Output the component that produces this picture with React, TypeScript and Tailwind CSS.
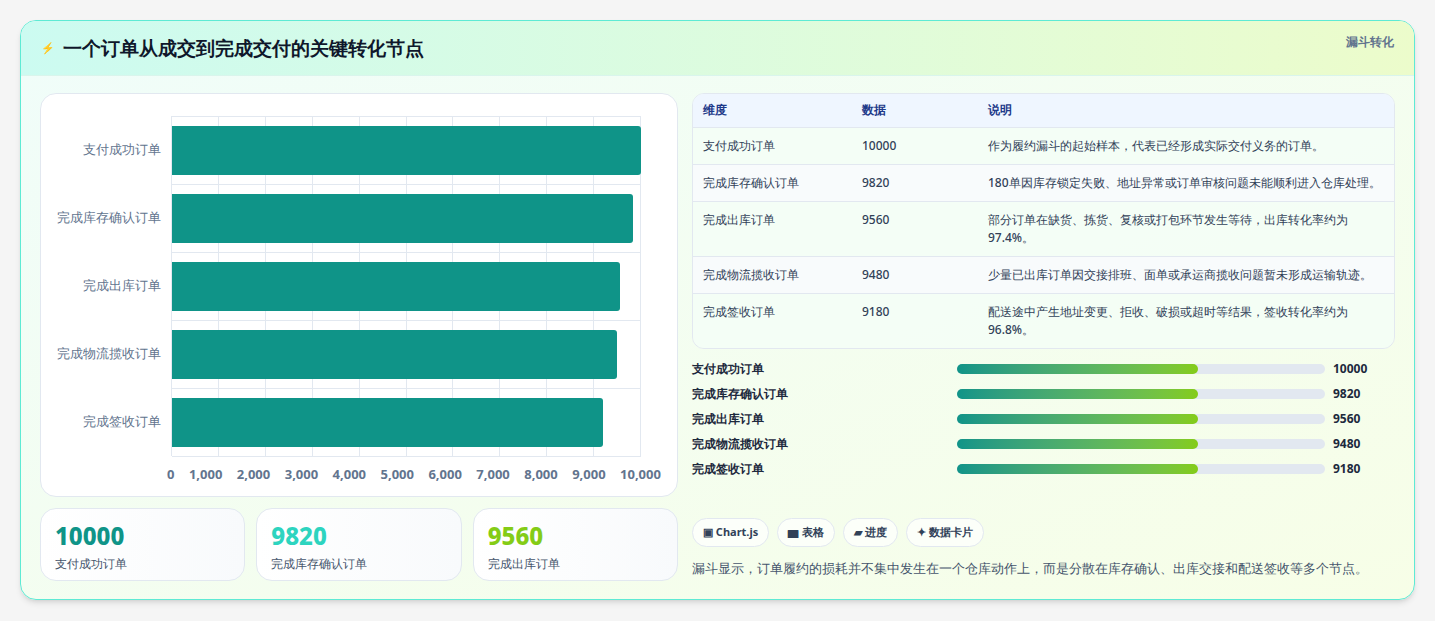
import React from 'react';

const rows = [
  { name: '支付成功订单', value: 10000, note: '作为履约漏斗的起始样本，代表已经形成实际交付义务的订单。' },
  { name: '完成库存确认订单', value: 9820, note: '180单因库存锁定失败、地址异常或订单审核问题未能顺利进入仓库处理。' },
  { name: '完成出库订单', value: 9560, note: '部分订单在缺货、拣货、复核或打包环节发生等待，出库转化率约为97.4%。' },
  { name: '完成物流揽收订单', value: 9480, note: '少量已出库订单因交接排班、面单或承运商揽收问题暂未形成运输轨迹。' },
  { name: '完成签收订单', value: 9180, note: '配送途中产生地址变更、拒收、破损或超时等结果，签收转化率约为96.8%。' },
];

const ticks = ['0', '1,000', '2,000', '3,000', '4,000', '5,000', '6,000', '7,000', '8,000', '9,000', '10,000'];

const BarChart: React.FC = () => (
  <div className="h-[404px] rounded-2xl border border-slate-200 bg-white pl-3 pr-9 pt-[22px]">
    <div className="flex">
      <div className="flex w-[118px] flex-col">
        {rows.map((r) => (
          <div key={r.name} className="flex h-[68px] items-center justify-end pr-[10px] text-[13px] text-slate-500">
            {r.name}
          </div>
        ))}
      </div>
      <div className="relative h-[340px] flex-1 border-l border-t border-slate-200">
        <div className="absolute inset-0 flex">
          {ticks.slice(1).map((t) => (
            <div key={t} className="flex-1 border-r border-slate-200" />
          ))}
        </div>
        <div className="relative flex flex-col">
          {rows.map((r) => (
            <div key={r.name} className="flex h-[68px] items-center border-b border-slate-200">
              <div className="h-[49px] rounded-r-[3px] bg-[#0f9488]" style={{ width: `${(r.value / 10000) * 100}%` }} />
            </div>
          ))}
        </div>
      </div>
    </div>
    <div className="ml-[118px] mt-[9px] flex justify-between text-[13px] font-bold text-slate-500">
      {ticks.map((t, i) => (
        <span key={t} className={i === 0 ? '-ml-[4px]' : i === 10 ? '-mr-[20px]' : ''}>{t}</span>
      ))}
    </div>
  </div>
);

const StatCard: React.FC<{ value: string; label: string; color: string }> = ({ value, label, color }) => (
  <div className="h-[73px] flex-1 rounded-2xl border border-slate-200 bg-gradient-to-r from-white to-[#f8fafc] px-[14px] pt-[12px]">
    <div className={`text-[24px] font-extrabold leading-[30px] ${color}`}>{value}</div>
    <div className="mt-[4px] text-[12px] text-slate-600">{label}</div>
  </div>
);

const App: React.FC = () => (
  <div className="min-h-[621px] bg-[#f5f5f5] px-5 pt-5 font-['Noto_Sans_CJK_SC','Noto_Sans',sans-serif] text-slate-800">
    <div className="h-[580px] overflow-hidden rounded-2xl border border-[#5eead4] bg-gradient-to-br from-[#f0fdfa] to-[#f7fee7] shadow-md">
      <div className="flex h-[55px] items-center justify-between border-b border-[#d9f5ec] bg-gradient-to-r from-[#ccfbf1] to-[#ecfccb] pl-[20px] pr-[20px]">
        <div className="flex items-center gap-[8px]">
          <span className="text-[11px] text-[#2563eb]">⚡</span>
          <h1 className="text-[19px] font-bold text-slate-900">一个订单从成交到完成交付的关键转化节点</h1>
        </div>
        <span className="-mt-[12px] text-[12px] font-semibold text-slate-500">漏斗转化</span>
      </div>
      <div className="flex gap-[14px] px-[19px] pt-[17px]">
        <div className="flex w-[638px] flex-col gap-[11px]">
          <BarChart />
          <div className="flex gap-[11px]">
            <StatCard value="10000" label="支付成功订单" color="text-[#0f9488]" />
            <StatCard value="9820" label="完成库存确认订单" color="text-[#2dd4bf]" />
            <StatCard value="9560" label="完成出库订单" color="text-[#84cc16]" />
          </div>
        </div>
        <div className="flex flex-1 flex-col">
          <div className="overflow-hidden rounded-xl border border-slate-200 bg-white/60">
            <table className="w-full text-left text-[12px]">
              <thead>
                <tr className="h-[33px] bg-[#eff6ff] text-[#1e3a8a]">
                  <th className="w-[169px] pl-[10px] font-semibold">维度</th>
                  <th className="w-[126px] font-semibold">数据</th>
                  <th className="font-semibold">说明</th>
                </tr>
              </thead>
              <tbody>
                {rows.map((r, i) => (
                  <tr key={r.name} className={`border-t border-slate-200 align-top font-medium text-slate-700 ${i % 2 ? 'bg-[#f8fafc]/80' : 'bg-[#f0fdf4]/60'}`}>
                    <td className="py-[9px] pl-[10px]">{r.name}</td>
                    <td className="py-[9px]">{r.value}</td>
                    <td className="py-[9px] pr-[12px] leading-[18px]">{r.note}</td>
                  </tr>
                ))}
              </tbody>
            </table>
          </div>
          <div className="mt-[11px] flex flex-col gap-[7px]">
            {rows.map((r) => (
              <div key={r.name} className="flex h-[18px] items-center text-[12px] font-semibold text-slate-800">
                <span className="w-[265px]">{r.name}</span>
                <div className="h-[10px] w-[368px] rounded-full bg-slate-200">
                  <div className="h-full w-[65.5%] rounded-full bg-gradient-to-r from-[#0f9488] to-[#84cc16]" />
                </div>
                <span className="ml-[8px] font-bold">{r.value}</span>
              </div>
            ))}
          </div>
          <div className="mt-[40px] flex gap-[8px]">
            {['▣ Chart.js', '▆ 表格', '▰ 进度', '✦ 数据卡片'].map((t) => (
              <span key={t} className="flex h-[29px] items-center rounded-full border border-slate-200 bg-white/70 px-[10px] text-[11px] font-bold text-slate-700">{t}</span>
            ))}
          </div>
          <p className="mt-[12px] text-[13px] text-slate-600">漏斗显示，订单履约的损耗并不集中发生在一个仓库动作上，而是分散在库存确认、出库交接和配送签收等多个节点。</p>
        </div>
      </div>
    </div>
  </div>
);

export default App;
